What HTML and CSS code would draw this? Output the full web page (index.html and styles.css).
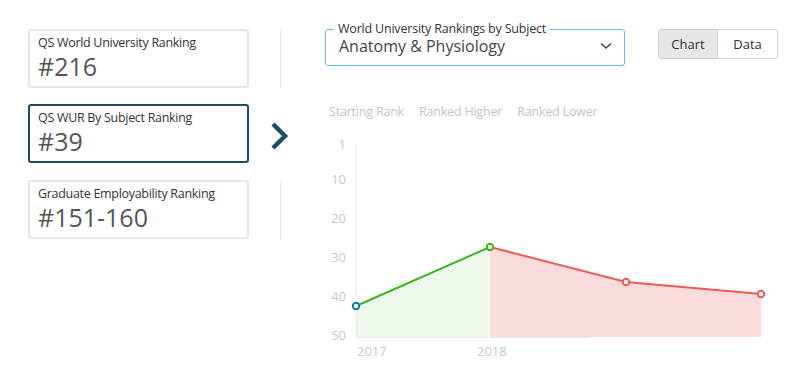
FILE: index.html
```html
<!DOCTYPE html>
<html lang="en">
<head>
    <meta charset="UTF-8">
    <meta name="viewport" content="width=device-width, initial-scale=1.0">
    <title>Rankings</title>
    <link rel="stylesheet" href="styles.css">
</head>
<body>
    <div class="page">
        <div class="rankings">
            <div class="rank-row">
                <div class="rank-card">
                    <div class="rank-title">QS World University Ranking</div>
                    <div class="rank-value">#216</div>
                </div>
                <div class="rank-side"><span class="divider"></span></div>
            </div>
            <div class="rank-row row-active">
                <div class="rank-card active">
                    <div class="rank-title">QS WUR By Subject Ranking</div>
                    <div class="rank-value">#39</div>
                </div>
                <div class="rank-side">
                    <svg class="chevron" width="22" height="32" viewBox="0 0 22 32">
                        <path d="M4 4 L16 16 L4 28" fill="none" stroke="#1d4f63" stroke-width="4.5" stroke-linejoin="miter"/>
                    </svg>
                </div>
            </div>
            <div class="rank-row row-last">
                <div class="rank-card">
                    <div class="rank-title">Graduate Employability Ranking</div>
                    <div class="rank-value">#151-160</div>
                </div>
                <div class="rank-side"><span class="divider"></span></div>
            </div>
        </div>

        <div class="panel">
            <div class="toolbar">
                <fieldset class="subject-select">
                    <legend>World University Rankings by Subject</legend>
                    <div class="select-value">
                        <span>Anatomy &amp; Physiology</span>
                        <svg width="12" height="8" viewBox="0 0 12 8">
                            <path d="M1 1.5 L6 6 L11 1.5" fill="none" stroke="#444" stroke-width="1.5"/>
                        </svg>
                    </div>
                </fieldset>
                <div class="view-toggle">
                    <button class="toggle-btn selected">Chart</button>
                    <button class="toggle-btn">Data</button>
                </div>
            </div>

            <div class="legend">
                <span>Starting Rank</span>
                <span>Ranked Higher</span>
                <span>Ranked Lower</span>
            </div>

            <svg class="chart" width="455" height="240" viewBox="0 0 455 240">
                <g class="axis-labels" text-anchor="end">
                    <text x="21" y="20">1</text>
                    <text x="21" y="55">10</text>
                    <text x="21" y="94">20</text>
                    <text x="21" y="133">30</text>
                    <text x="21" y="172">40</text>
                    <text x="21" y="211">50</text>
                </g>
                <polygon points="31,177 165,118 165,208 31,208" fill="#eef8ec"/>
                <polygon points="165,118 301,153 436,165 436,208 165,208" fill="#fbdcdc"/>
                <line x1="31" y1="15" x2="31" y2="208" stroke="#e6e6e6" stroke-width="1"/>
                <line x1="31" y1="208.5" x2="265" y2="208.5" stroke="#e6e6e6" stroke-width="1"/>
                <polyline points="31,177 165,118" fill="none" stroke="#3cb521" stroke-width="2"/>
                <polyline points="165,118 301,153 436,165" fill="none" stroke="#ee5b57" stroke-width="2"/>
                <circle cx="31" cy="177" r="3.2" fill="#fff" stroke="#137aa6" stroke-width="2"/>
                <circle cx="165" cy="118" r="3.2" fill="#fff" stroke="#3cb521" stroke-width="2"/>
                <circle cx="301" cy="153" r="3.2" fill="#fff" stroke="#ee5b57" stroke-width="2"/>
                <circle cx="436" cy="165" r="3.2" fill="#fff" stroke="#ee5b57" stroke-width="2"/>
                <g class="axis-labels">
                    <text x="32" y="227">2017</text>
                    <text x="152" y="227">2018</text>
                </g>
            </svg>
        </div>
    </div>
</body>
</html>
```
FILE: styles.css
```css
body {
    font-family: "Open Sans", "Noto Sans", Arial, sans-serif;
    background-color: #fff;
    color: #333;
    margin: 0;
}

.page {
    display: flex;
    padding: 29px 0 0 28px;
}

.rankings {
    display: flex;
    flex-direction: column;
}

.rank-row {
    display: flex;
    margin-bottom: 16px;
}

.row-active {
    margin-bottom: 17px;
}

.rank-card {
    width: 209px;
    height: 55px;
    border: 2px solid #e6e6e6;
    border-radius: 3px;
    padding: 0 0 0 8px;
    overflow: hidden;
}

.rank-card.active {
    border-color: #1d4f63;
}

.rank-title {
    font-size: 12.5px;
    line-height: 16px;
    margin-top: 4px;
    color: #333;
    letter-spacing: -0.3px;
    white-space: nowrap;
}

.rank-value {
    font-size: 25px;
    line-height: 30px;
    color: #555;
}

.rank-side {
    width: 76px;
    display: flex;
    align-items: center;
    justify-content: flex-start;
}

.divider {
    display: block;
    width: 1px;
    height: 58px;
    margin-left: 31px;
    background-color: #e6e6e6;
}

.chevron {
    margin-left: 20px;
    margin-top: 4px;
}

.panel {
    display: flex;
    flex-direction: column;
    width: 453px;
}

.toolbar {
    display: flex;
    justify-content: space-between;
    align-items: flex-start;
}

.subject-select {
    margin: -7px 0 0 0;
    padding: 0 12px 6px 13px;
    width: 300px;
    height: 44px;
    border: 1px solid #5fc4ec;
    border-radius: 3px;
    min-width: 0;
    box-sizing: border-box;
}

.subject-select legend {
    font-size: 12.5px;
    line-height: 14px;
    padding: 0 4px;
    margin-left: -5px;
    color: #333;
    letter-spacing: -0.2px;
}

.select-value {
    display: flex;
    justify-content: space-between;
    align-items: center;
    font-size: 16px;
    line-height: 22px;
    color: #444;
    margin-top: -1px;
}

.view-toggle {
    display: flex;
}

.toggle-btn {
    font-family: inherit;
    font-size: 13px;
    color: #333;
    background-color: #fff;
    border: 1px solid #cfcfcf;
    height: 30px;
    padding: 0;
    width: 60px;
    cursor: pointer;
}

.toggle-btn:first-child {
    border-radius: 3px 0 0 3px;
}

.toggle-btn:last-child {
    border-radius: 0 3px 3px 0;
    border-left: none;
}

.toggle-btn.selected {
    background-color: #e6e6e6;
}

.legend {
    display: flex;
    gap: 15px;
    margin-top: 37px;
    margin-left: 4px;
    font-size: 12.5px;
    letter-spacing: -0.2px;
    color: #c4c4c4;
}

.chart {
    display: block;
    margin-top: 9px;
}

.axis-labels text {
    font-family: "Open Sans", "Noto Sans", Arial, sans-serif;
    font-size: 13px;
    fill: #c8c8c8;
}
```
